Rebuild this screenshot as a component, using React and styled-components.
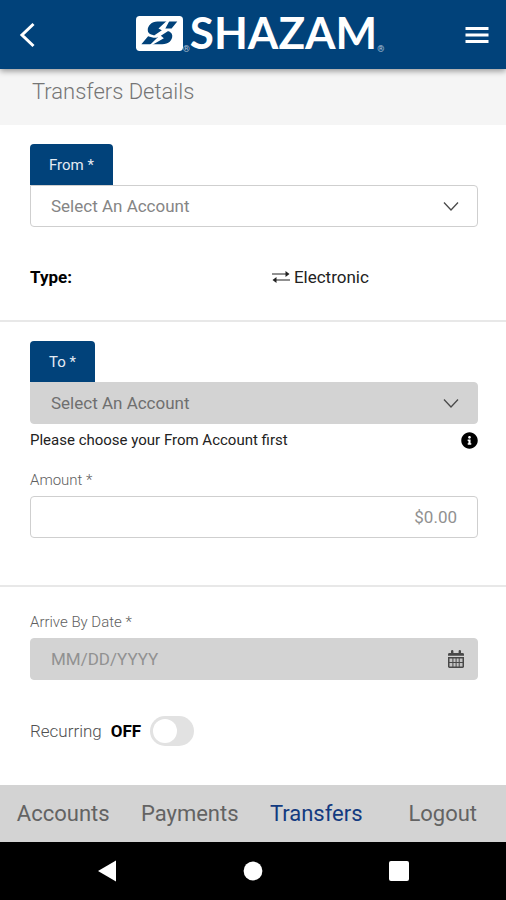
import React, { useState } from "react";
import styled, { createGlobalStyle } from "styled-components";
import { FaInfoCircle } from "react-icons/fa";

const navItems = ["Accounts", "Payments", "Transfers", "Logout"];

function ShazamLogo() {
  return (
    <Brand aria-label="Shazam">
      <svg width="47" height="35" viewBox="0 0 140 104" aria-hidden="true">
        <rect width="140" height="104" rx="11" fill="#ffffff" />
        <path
          d="M123 16H64C46 16 35 29 35 41C35 51 42 55 52 57H60C66 59 66 64 60 65H52L36 60L16 84H78C97 84 109 72 108 58C107 49 99 45 90 43H80C74 42 75 37 81 37H106Z"
          fill="#01427a"
        />
        <path
          d="M96 10L67 37L77 42L55 57L65 63L32 95L83 66L74 59L97 44L87 38L101 12Z"
          fill="#ffffff"
        />
      </svg>
      <Registered>®</Registered>
      <BrandName>SHAZAM</BrandName>
      <Registered>®</Registered>
    </Brand>
  );
}

function Chevron() {
  return (
    <svg width="18" height="18" viewBox="0 0 18 18" fill="none" stroke="#4a4a4a" strokeWidth="1.3" aria-hidden="true">
      <path d="M2 5.5L9 13L16 5.5" />
    </svg>
  );
}

function TransferArrows() {
  return (
    <svg width="18" height="14" viewBox="0 0 18 14" fill="none" stroke="#222222" aria-hidden="true">
      <path d="M0 4H16M2 10H18" strokeWidth="1.2" />
      <path d="M13.5 1L17.5 4L13.5 7ZM4.5 7L0.5 10L4.5 13Z" fill="#222222" stroke="none" />
    </svg>
  );
}

function CalendarIcon() {
  return (
    <svg width="16" height="18" viewBox="0 0 16 18" aria-hidden="true">
      <path d="M3 3V1.2Q3 0 4.2 0T5.4 1.2V3H10.6V1.2Q10.6 0 11.8 0T13 1.2V3H14.5Q16 3 16 4.4V5.8H0V4.4Q0 3 1.5 3Z" fill="#484848" />
      <path d="M0 7H16V16.6Q16 18 14.6 18H1.4Q0 18 0 16.6Z" fill="#484848" />
      <path d="M1.5 8.5H4.4V11.9H1.5ZM5.4 8.5H7.6V11.9H5.4ZM8.6 8.5H10.7V11.9H8.6ZM11.7 8.5H14.5V11.9H11.7ZM1.5 13H4.4V16.5H1.5ZM5.4 13H7.6V16.5H5.4ZM8.6 13H10.7V16.5H8.6ZM11.7 13H14.5V16.5H11.7Z" fill="#c4c4c4" />
    </svg>
  );
}

function AccountField({ id, label, disabled }) {
  return (
    <div>
      <TabLabel htmlFor={id}>{label}</TabLabel>
      <FieldBox $disabled={disabled} $tabbed>
        <Select id={id} disabled={disabled} defaultValue="">
          <option value="">Select An Account</option>
        </Select>
        <Chevron />
      </FieldBox>
    </div>
  );
}

function App() {
  const [recurring, setRecurring] = useState(false);

  return (
    <Screen>
      <GlobalStyle />
      <Header>
        <IconButton aria-label="Back">
          <svg width="16" height="26" viewBox="0 0 16 26" fill="none" stroke="#ffffff" strokeWidth="3">
            <path d="M14.5 2L3 13L14.5 24" />
          </svg>
        </IconButton>
        <ShazamLogo />
        <IconButton aria-label="Menu">
          <svg width="24" height="18" viewBox="0 0 24 18" stroke="#ffffff" strokeWidth="2.8">
            <path d="M0.5 2.5H23.5M0.5 9H23.5M0.5 15.5H23.5" />
          </svg>
        </IconButton>
      </Header>

      <PageTitle>Transfers Details</PageTitle>

      <Form>
        <Section>
          <AccountField id="from" label="From *" />
          <TypeRow>
            <Strong>Type:</Strong>
            <TypeValue>
              <TransferArrows />
              Electronic
            </TypeValue>
          </TypeRow>
        </Section>

        <Section>
          <AccountField id="to" label="To *" disabled />
          <HelpRow>
            Please choose your From Account first
            <FaInfoCircle size={17} color="#000000" />
          </HelpRow>
          <Label htmlFor="amount">Amount *</Label>
          <FieldBox>
            <Input id="amount" placeholder="$0.00" $align="right" />
          </FieldBox>
          <Spacer />
        </Section>

        <Section $roomy>
          <Label htmlFor="date">Arrive By Date *</Label>
          <FieldBox $disabled>
            <Input id="date" placeholder="MM/DD/YYYY" disabled />
            <CalendarIcon />
          </FieldBox>
          <RecurringRow>
            <label htmlFor="recurring">Recurring</label>
            <Strong>{recurring ? "ON" : "OFF"}</Strong>
            <Toggle
              id="recurring"
              type="checkbox"
              checked={recurring}
              onChange={(e) => setRecurring(e.target.checked)}
            />
          </RecurringRow>
        </Section>
      </Form>

      <Nav>
        {navItems.map((item) => (
          <NavLink key={item} href="#" $active={item === "Transfers"}>
            {item}
          </NavLink>
        ))}
      </Nav>

      <SystemBar>
        <IconButton aria-label="System back">
          <svg width="18" height="22" viewBox="0 0 18 22" fill="#ffffff">
            <path d="M18 0.5V21.5L0 11Z" />
          </svg>
        </IconButton>
        <IconButton aria-label="Home">
          <svg width="20" height="20" viewBox="0 0 20 20" fill="#ffffff">
            <circle cx="10" cy="10" r="9.4" />
          </svg>
        </IconButton>
        <IconButton aria-label="Recent apps">
          <svg width="20" height="20" viewBox="0 0 20 20" fill="#ffffff">
            <rect width="20" height="20" rx="2" />
          </svg>
        </IconButton>
      </SystemBar>
    </Screen>
  );
}

const GlobalStyle = createGlobalStyle`
  * {
    box-sizing: border-box;
  }

  body {
    margin: 0;
    background: #ffffff;
    font-family: Roboto, "Liberation Sans", sans-serif;
  }

  button, input, select {
    font-family: inherit;
  }

  svg {
    display: block;
    flex-shrink: 0;
  }
`;

const Screen = styled.div`
  min-height: 100vh;
  display: flex;
  flex-direction: column;
`;

const Header = styled.header`
  position: relative;
  display: flex;
  align-items: center;
  justify-content: space-between;
  height: 69px;
  padding: 0 17px 0 19px;
  background: #01427a;
  box-shadow: 0 2px 6px rgba(0, 0, 0, 0.4);
`;

const IconButton = styled.button`
  display: flex;
  align-items: center;
  justify-content: center;
  padding: 0;
  border: 0;
  background: none;
  cursor: pointer;
`;

const Brand = styled.div`
  display: flex;
  align-items: flex-end;
  height: 38px;
  padding-left: 20px;
  color: #ffffff;

  svg {
    align-self: flex-start;
  }
`;

const BrandName = styled.span`
  font: 700 44px/44px Lato, sans-serif;
`;

const Registered = styled.span`
  color: #b4c4d8;
  font-size: 9px;
  line-height: 9px;
`;

const PageTitle = styled.h1`
  margin: 0;
  height: 56px;
  padding: 9px 32px;
  background: #f5f5f5;
  color: #757575;
  font-size: 22px;
  font-weight: 300;
  line-height: 28px;
`;

const Form = styled.form`
  flex: 1;
  display: flex;
  flex-direction: column;
`;

const Section = styled.section`
  padding: ${(props) => (props.$roomy ? "25px" : "19px")} 28px 0 30px;

  & + & {
    border-top: 2px solid #e8e8e8;
  }
`;

const TabLabel = styled.label`
  display: inline-flex;
  align-items: center;
  height: 41px;
  padding: 0 19px;
  border-radius: 4px 4px 0 0;
  background: #01427a;
  color: #e4ebf3;
  font-size: 15px;
  vertical-align: top;
`;

const FieldBox = styled.div`
  display: grid;
  align-items: center;
  height: 42px;
  border: 1px solid ${(props) => (props.$disabled ? "#d3d3d3" : "#cfcfcf")};
  border-radius: ${(props) => (props.$tabbed ? "0 4px 4px 4px" : "4px")};
  background: ${(props) => (props.$disabled ? "#d3d3d3" : "#ffffff")};

  > * {
    grid-area: 1 / 1;
  }

  > svg {
    justify-self: end;
    margin-right: ${(props) => (props.$tabbed ? "17px" : "13px")};
    pointer-events: none;
  }
`;

const Select = styled.select`
  appearance: none;
  width: 100%;
  height: 100%;
  padding: 0 20px;
  border: 0;
  background: transparent;
  color: ${(props) => (props.disabled ? "#6f6f6f" : "#858585")};
  font-size: 17px;
  opacity: 1;
`;

const Input = styled.input`
  width: 100%;
  height: 100%;
  padding: 0 20px;
  border: 0;
  background: transparent;
  color: #555555;
  font-size: 17px;
  text-align: ${(props) => props.$align || "left"};

  &::placeholder {
    color: #919191;
    opacity: 1;
  }
`;

const Label = styled.label`
  display: block;
  margin-bottom: 6px;
  color: #606060;
  font-size: 15px;
  font-weight: 300;
  line-height: 20px;
`;

const TypeRow = styled.div`
  display: grid;
  grid-template-columns: 54% 1fr;
  padding: 38px 0 31px;
  font-size: 17px;
  line-height: 24px;
`;

const TypeValue = styled.span`
  display: flex;
  align-items: center;
  gap: 4px;
  color: #222222;
`;

const Strong = styled.strong`
  color: #000000;
  font-weight: 700;
`;

const HelpRow = styled.div`
  display: flex;
  align-items: center;
  justify-content: space-between;
  padding: 6px 0 20px;
  color: #222222;
  font-size: 15px;
  line-height: 20px;
`;

const Spacer = styled.div`
  height: 47px;
`;

const RecurringRow = styled.div`
  display: flex;
  align-items: center;
  gap: 9px;
  padding: 36px 0;
  color: #505050;
  font-size: 17px;
  font-weight: 300;
  line-height: 24px;
`;

const Toggle = styled.input`
  appearance: none;
  display: flex;
  width: 44px;
  height: 30px;
  margin: 0;
  padding: 3px;
  border-radius: 15px;
  background: ${(props) => (props.checked ? "#01427a" : "#e2e2e2")};
  justify-content: ${(props) => (props.checked ? "flex-end" : "flex-start")};

  &::before {
    content: "";
    width: 24px;
    height: 24px;
    border-radius: 50%;
    background: #ffffff;
  }
`;

const Nav = styled.nav`
  display: grid;
  grid-template-columns: repeat(4, 1fr);
  align-items: center;
  height: 57px;
  background: #d3d3d3;
`;

const NavLink = styled.a`
  color: ${(props) => (props.$active ? "#123a80" : "#636363")};
  font-size: 22px;
  line-height: 28px;
  text-align: center;
  text-decoration: none;
`;

const SystemBar = styled.footer`
  display: grid;
  grid-template-columns: repeat(3, 1fr);
  height: 58px;
  padding: 0 34px;
  background: #000000;
`;

export default App;
